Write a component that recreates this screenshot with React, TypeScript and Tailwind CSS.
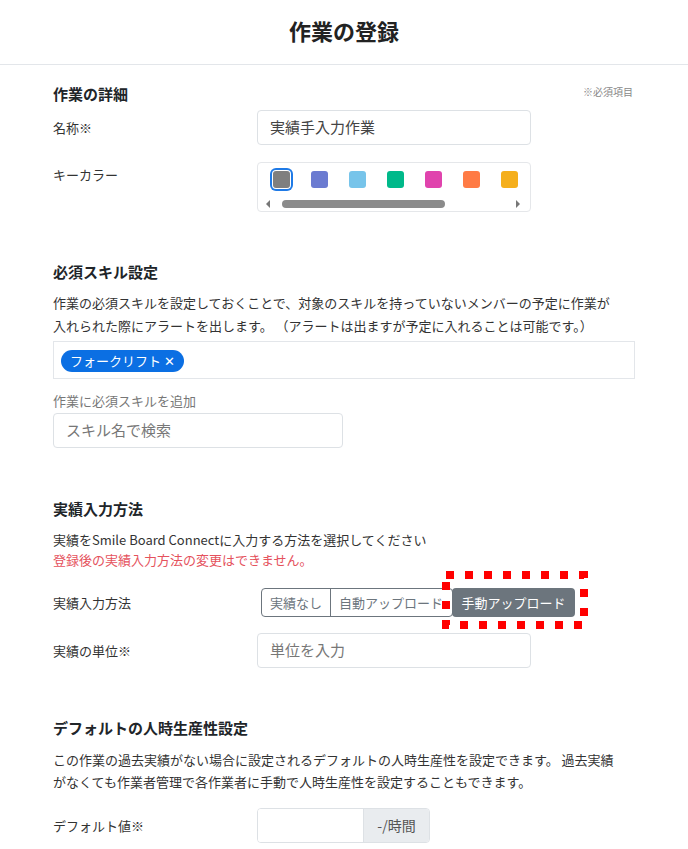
import React from "react";

const swatches = ["#7f7f7f", "#6b7bd1", "#77c4ea", "#00b98a", "#e043ad", "#ff7b45", "#f5af1c"];

function Label({ children }: { children: React.ReactNode }) {
  return <div className="w-[204px] shrink-0 text-[13px] leading-5 text-[#333]">{children}</div>;
}

export default function App() {
  return (
    <div className="w-[688px] min-h-[849px] bg-white font-['Noto_Sans_CJK_JP','Noto_Sans',sans-serif] text-[#212529]">
      {/* Header */}
      <div className="h-[65px] flex items-center justify-center border-b border-[#e3e6ea] pb-[5px]">
        <h1 className="text-[22px] leading-7 font-bold text-[#222]">作業の登録</h1>
      </div>

      <div className="px-[53px]">
        {/* 作業の詳細 */}
        <div className="pt-[18px] flex justify-between items-start">
          <h2 className="text-[15px] leading-[22px] font-bold">作業の詳細</h2>
          <span className="text-[10px] leading-4 text-[#888] mt-[1px] mr-[2px]">※必須項目</span>
        </div>

        <div className="mt-[5px] flex items-center">
          <Label>名称※</Label>
          <div className="w-[274px] h-[35px] border border-[#dde1e5] rounded-[4px] flex items-center px-[12px] text-[15px] text-[#444]">
            実績手入力作業
          </div>
        </div>

        <div className="mt-[17px] flex items-start">
          <div className="pt-[3px]">
            <Label>キーカラー</Label>
          </div>
          <div className="w-[274px] h-[50px] border border-[#e5e7ea] rounded-[4px] overflow-hidden">
            <div className="flex gap-[21px] pl-[15px] pt-[8px]">
              {swatches.map((c, i) => (
                <div
                  key={c}
                  className={
                    i === 0
                      ? "w-[17px] h-[17px] shrink-0 rounded-[3px] ring-2 ring-[#1f7ae6] ring-offset-1"
                      : "w-[17px] h-[17px] shrink-0 rounded-[3px]"
                  }
                  style={{ background: c }}
                />
              ))}
            </div>
            <div className="mt-[11px] flex items-center h-[9px] pl-[8px] pr-[10px]">
              <div className="w-0 h-0 border-y-[4px] border-y-transparent border-r-[4px] border-r-[#777]" />
              <div className="ml-[12px] w-[163px] h-[8px] rounded-full bg-[#8b8b8b]" />
              <div className="ml-auto w-0 h-0 border-y-[4px] border-y-transparent border-l-[4px] border-l-[#777]" />
            </div>
          </div>
        </div>

        {/* 必須スキル設定 */}
        <h2 className="mt-[49px] text-[15px] leading-[22px] font-bold">必須スキル設定</h2>
        <p className="mt-[8px] text-[13px] leading-[23px] text-[#333] whitespace-nowrap">
          作業の必須スキルを設定しておくことで、対象のスキルを持っていないメンバーの予定に作業が
          <br />
          入れられた際にアラートを出します。 （アラートは出ますが予定に入れることは可能です。）
        </p>
        <div className="mt-[4px] h-[38px] border border-[#e3e6ea] pl-[7px] pt-[5px]">
          <span className="inline-flex items-center h-[22px] px-[9px] rounded-full bg-[#0b6fe3] text-white text-[13px] leading-none">
            フォークリフト ✕
          </span>
        </div>
        <div className="mt-[12px] text-[13px] leading-5 text-[#777]">作業に必須スキルを追加</div>
        <div className="mt-[2px] w-[290px] h-[35px] border border-[#dde1e5] rounded-[4px] flex items-center px-[12px] text-[15px] text-[#777]">
          スキル名で検索
        </div>

        {/* 実績入力方法 */}
        <h2 className="mt-[50px] text-[15px] leading-[22px] font-bold">実績入力方法</h2>
        <p className="mt-[10px] text-[13px] leading-[20px] text-[#333]">
          実績をSmile Board Connectに入力する方法を選択してください
        </p>
        <p className="text-[13px] leading-[20px] text-[#e5525d]">登録後の実績入力方法の変更はできません。</p>

        <div className="mt-[18px] flex items-center">
          <Label>実績入力方法</Label>
          <div className="relative ml-[4px] flex h-[29px]">
            <div className="flex h-full border border-[#6c757d] rounded-[4px] overflow-hidden text-[13px] text-[#6c757d]">
              <div className="w-[69px] flex items-center justify-center border-r border-[#6c757d]">実績なし</div>
              <div className="w-[121px] flex items-center pl-[8px] overflow-hidden whitespace-nowrap">自動アップロード</div>
            </div>
            <div className="-ml-[1px] w-[123px] h-full flex items-center justify-center rounded-[4px] bg-[#6c757d] text-white text-[13px] relative">
              手動アップロード
            </div>
            <svg className="absolute left-[181px] top-[-17px]" width="146" height="58" viewBox="0 0 146 58">
              <rect x="4" y="4" width="138" height="50" fill="none" stroke="#ff0000" strokeWidth="8" strokeDasharray="8 11" />
            </svg>
          </div>
        </div>

        <div className="mt-[16px] flex items-center">
          <Label>実績の単位※</Label>
          <div className="w-[274px] h-[35px] border border-[#dde1e5] rounded-[4px] flex items-center px-[12px] text-[15px] text-[#777]">
            単位を入力
          </div>
        </div>

        {/* デフォルトの人時生産性設定 */}
        <h2 className="mt-[49px] text-[15px] leading-[22px] font-bold">デフォルトの人時生産性設定</h2>
        <p className="mt-[10px] text-[13px] leading-[22px] text-[#333] whitespace-nowrap">
          この作業の過去実績がない場合に設定されるデフォルトの人時生産性を設定できます。 過去実績
          <br />
          がなくても作業者管理で各作業者に手動で人時生産性を設定することもできます。
        </p>

        <div className="mt-[15px] flex items-center">
          <Label>デフォルト値※</Label>
          <div className="flex h-[35px] w-[173px] border border-[#dde1e5] rounded-[4px] overflow-hidden">
            <div className="w-[105px] bg-white" />
            <div className="flex-1 flex items-center justify-center bg-[#e9ecef] border-l border-[#dde1e5] text-[14px] text-[#555]">
              -/時間
            </div>
          </div>
        </div>
      </div>
    </div>
  );
}
